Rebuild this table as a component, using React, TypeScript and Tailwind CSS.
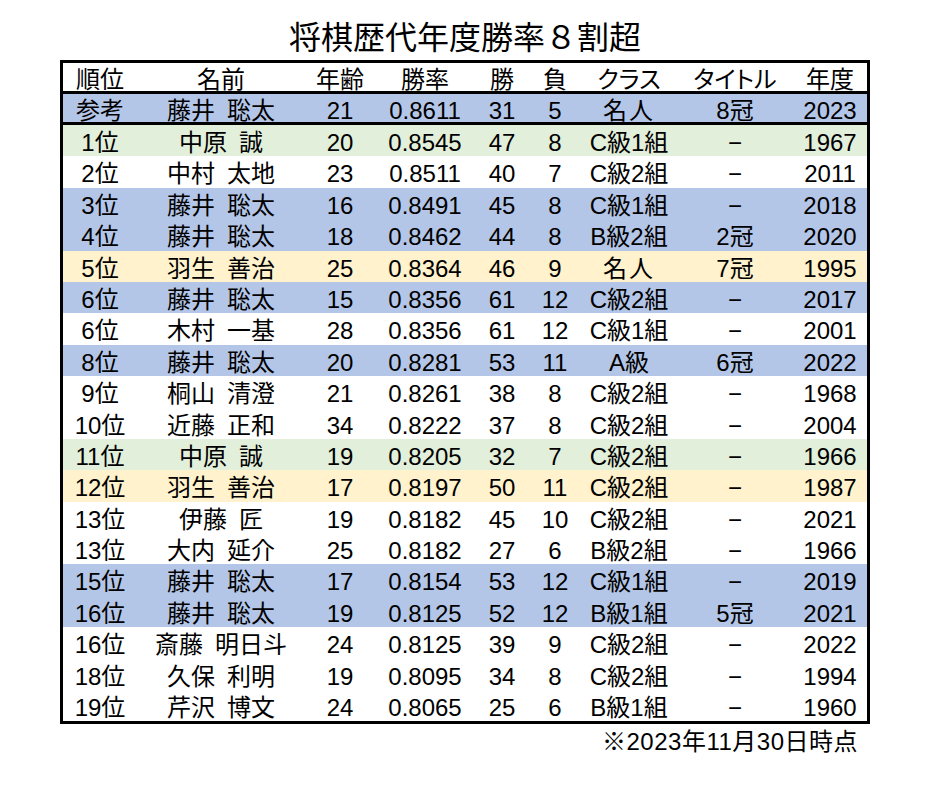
import React from "react";

type Row = {
  rank: string;
  name: string;
  age: string;
  rate: string;
  win: string;
  lose: string;
  cls: string;
  title: string;
  year: string;
  bg: "blue" | "green" | "yellow" | "white";
};

const D = "−";

const rows: Row[] = [
  { rank: "1位", name: "中原 誠", age: "20", rate: "0.8545", win: "47", lose: "8", cls: "C級1組", title: D, year: "1967", bg: "green" },
  { rank: "2位", name: "中村 太地", age: "23", rate: "0.8511", win: "40", lose: "7", cls: "C級2組", title: D, year: "2011", bg: "white" },
  { rank: "3位", name: "藤井 聡太", age: "16", rate: "0.8491", win: "45", lose: "8", cls: "C級1組", title: D, year: "2018", bg: "blue" },
  { rank: "4位", name: "藤井 聡太", age: "18", rate: "0.8462", win: "44", lose: "8", cls: "B級2組", title: "2冠", year: "2020", bg: "blue" },
  { rank: "5位", name: "羽生 善治", age: "25", rate: "0.8364", win: "46", lose: "9", cls: "名人", title: "7冠", year: "1995", bg: "yellow" },
  { rank: "6位", name: "藤井 聡太", age: "15", rate: "0.8356", win: "61", lose: "12", cls: "C級2組", title: D, year: "2017", bg: "blue" },
  { rank: "6位", name: "木村 一基", age: "28", rate: "0.8356", win: "61", lose: "12", cls: "C級1組", title: D, year: "2001", bg: "white" },
  { rank: "8位", name: "藤井 聡太", age: "20", rate: "0.8281", win: "53", lose: "11", cls: "A級", title: "6冠", year: "2022", bg: "blue" },
  { rank: "9位", name: "桐山 清澄", age: "21", rate: "0.8261", win: "38", lose: "8", cls: "C級2組", title: D, year: "1968", bg: "white" },
  { rank: "10位", name: "近藤 正和", age: "34", rate: "0.8222", win: "37", lose: "8", cls: "C級2組", title: D, year: "2004", bg: "white" },
  { rank: "11位", name: "中原 誠", age: "19", rate: "0.8205", win: "32", lose: "7", cls: "C級2組", title: D, year: "1966", bg: "green" },
  { rank: "12位", name: "羽生 善治", age: "17", rate: "0.8197", win: "50", lose: "11", cls: "C級2組", title: D, year: "1987", bg: "yellow" },
  { rank: "13位", name: "伊藤 匠", age: "19", rate: "0.8182", win: "45", lose: "10", cls: "C級2組", title: D, year: "2021", bg: "white" },
  { rank: "13位", name: "大内 延介", age: "25", rate: "0.8182", win: "27", lose: "6", cls: "B級2組", title: D, year: "1966", bg: "white" },
  { rank: "15位", name: "藤井 聡太", age: "17", rate: "0.8154", win: "53", lose: "12", cls: "C級1組", title: D, year: "2019", bg: "blue" },
  { rank: "16位", name: "藤井 聡太", age: "19", rate: "0.8125", win: "52", lose: "12", cls: "B級1組", title: "5冠", year: "2021", bg: "blue" },
  { rank: "16位", name: "斎藤 明日斗", age: "24", rate: "0.8125", win: "39", lose: "9", cls: "C級2組", title: D, year: "2022", bg: "white" },
  { rank: "18位", name: "久保 利明", age: "19", rate: "0.8095", win: "34", lose: "8", cls: "C級2組", title: D, year: "1994", bg: "white" },
  { rank: "19位", name: "芹沢 博文", age: "24", rate: "0.8065", win: "25", lose: "6", cls: "B級1組", title: D, year: "1960", bg: "white" },
];

const bgClass: Record<Row["bg"], string> = {
  blue: "bg-[#b4c6e7]",
  green: "bg-[#e2efda]",
  yellow: "bg-[#fff2cc]",
  white: "bg-white",
};

const cols = "grid grid-cols-[74px_168px_70px_100px_54px_52px_96px_116px_74px] items-center";

function Name({ v }: { v: string }) {
  const [a, b] = v.split(" ");
  return (
    <span>
      {a}
      <span className="inline-block w-[12px]" />
      {b}
    </span>
  );
}

function Cells({ r }: { r: Omit<Row, "bg"> }) {
  return (
    <>
      <div className="text-center">{r.rank}</div>
      <div className="text-center">
        <Name v={r.name} />
      </div>
      <div className="text-center">{r.age}</div>
      <div className="text-center">{r.rate}</div>
      <div className="text-center">{r.win}</div>
      <div className="text-center">{r.lose}</div>
      <div className="text-center">{r.cls === "名人" ? <span className="tracking-[2px]">名人</span> : r.cls}</div>
      <div className="text-center">{r.title}</div>
      <div className="text-center">{r.year}</div>
    </>
  );
}

export default function App() {
  return (
    <div
      className="w-[932px] h-[787px] bg-white text-black"
      style={{ fontFamily: '"Liberation Sans", "Noto Sans CJK JP", sans-serif' }}
    >
      <div className="h-[60px] pt-[16px] flex items-center justify-center">
        <div className="text-[32px] leading-[40px] ml-[-2px]">将棋歴代年度勝率８割超</div>
      </div>
      <div className="ml-[60px] w-[810px]">
        <div className="border-[3px] border-black text-[24px] leading-[28px]">
          <div className={`${cols} h-[31px] pt-[3px] border-b-[3px] border-black bg-white`}>
            <div className="text-center">順位</div>
            <div className="text-center">名前</div>
            <div className="text-center">年齢</div>
            <div className="text-center">勝率</div>
            <div className="text-center">勝</div>
            <div className="text-center">負</div>
            <div className="text-center [font-feature-settings:'palt']">クラス</div>
            <div className="text-center [font-feature-settings:'palt']">タイトル</div>
            <div className="text-center">年度</div>
          </div>
          <div className={`${cols} h-[31px] pt-[3px] border-b-[3px] border-black bg-[#b4c6e7]`}>
            <Cells
              r={{ rank: "参考", name: "藤井 聡太", age: "21", rate: "0.8611", win: "31", lose: "5", cls: "名人", title: "8冠", year: "2023" }}
            />
          </div>
          {rows.map((r, i) => (
            <div key={i} className={`${cols} h-[31.4px] pt-[4px] ${bgClass[r.bg]}`}>
              <Cells r={r} />
            </div>
          ))}
        </div>
        <div className="mt-[4px] pr-[12px] text-right text-[24px] leading-[28px] tracking-[0.5px]">
          ※2023年11月30日時点
        </div>
      </div>
    </div>
  );
}
